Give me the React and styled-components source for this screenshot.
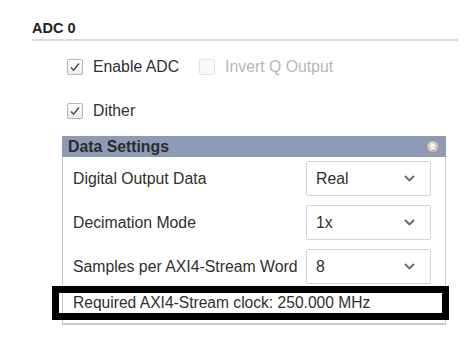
import React from "react";
import styled, { createGlobalStyle } from "styled-components";

const GlobalStyle = createGlobalStyle`
  html, body {
    margin: 0;
    padding: 0;
    background: #ffffff;
  }
  body {
    font-family: "Liberation Sans", Arial, sans-serif;
    color: #333333;
  }
`;

const Section = styled.section`
  width: 474px;
  height: 339px;
  box-sizing: border-box;
  padding: 20px 16px 0 32px;
  overflow: hidden;
`;

const Title = styled.h3`
  margin: 0;
  padding-bottom: 2px;
  font-size: 14.5px;
  line-height: 17px;
  font-weight: bold;
  color: #222222;
  border-bottom: 2px solid #dadada;
`;

const OptionRow = styled.div`
  display: flex;
  align-items: center;
  height: 20px;
  margin: ${(p) => p.$top}px 0 0 35px;
`;

const Option = styled.label`
  display: flex;
  align-items: center;
  gap: 10px;
  margin-right: 20px;
  font-size: 15.8px;
  color: ${(p) => (p.$disabled ? "#b8b8b8" : "#2f2f2f")};
`;

const Box = styled.span`
  width: 16px;
  height: 16px;
  box-sizing: border-box;
  border-radius: 2px;
  border: 1px solid ${(p) => (p.$disabled ? "#e2e2e2" : "#b5b5b5")};
  background: ${(p) =>
    p.$disabled ? "#fafafa" : "linear-gradient(#ffffff, #ececec)"};
  display: flex;
  align-items: center;
  justify-content: center;
`;

const Panel = styled.div`
  margin: 15px 0 0 30px;
  width: 384px;
`;

const PanelHeader = styled.div`
  display: flex;
  align-items: center;
  justify-content: space-between;
  height: 21px;
  padding: 0 6px;
  background: #8e9bb6;
  font-size: 15.8px;
  font-weight: bold;
  color: #2b2b2b;
`;

const PanelBody = styled.div`
  display: flex;
  flex-direction: column;
  gap: 9px;
  padding: 4px 0 3px;
  border: 1px solid #c3c9d6;
  border-top: none;
  border-bottom: 2px solid #c3c9d6;
`;

const FieldRow = styled.div`
  display: flex;
  align-items: center;
  justify-content: space-between;
  height: 35px;
  padding: 0 14px 0 10px;
  font-size: 15.8px;
  color: #2f2f2f;
`;

const Select = styled.div`
  width: 125px;
  height: 35px;
  box-sizing: border-box;
  display: flex;
  align-items: center;
  justify-content: space-between;
  padding: 0 15px 0 9px;
  border: 1px solid #d4d4d4;
  border-radius: 2px;
  background: #ffffff;
  font-size: 15.8px;
  color: #2f2f2f;
`;

const ClockRow = styled.div`
  position: relative;
  display: flex;
  align-items: center;
  height: 34px;
  margin-top: -7px;
  padding-left: 10px;
  font-size: 15.6px;
  color: #2f2f2f;

  &::after {
    content: "";
    position: absolute;
    top: 0;
    bottom: 0;
    left: -11px;
    right: -4px;
    border: 7px solid #000000;
  }
`;

const Check = () => (
  <svg width="12" height="12" viewBox="0 0 12 12">
    <path d="M2 6.5 L4.6 9.2 L10 2.5" fill="none" stroke="#4a4a4a" strokeWidth="1.4" />
  </svg>
);

const Chevron = () => (
  <svg width="11" height="7" viewBox="0 0 11 7">
    <path d="M1 1 L5.5 5.5 L10 1" fill="none" stroke="#666666" strokeWidth="1.8" />
  </svg>
);

const Collapse = () => (
  <svg width="14" height="14" viewBox="0 0 14 14">
    <defs>
      <radialGradient id="cg" cx="0.4" cy="0.35" r="0.7">
        <stop offset="0" stopColor="#eeeae0" />
        <stop offset="1" stopColor="#aaa596" />
      </radialGradient>
    </defs>
    <circle cx="7" cy="7" r="6.3" fill="url(#cg)" stroke="#8f8a7c" strokeWidth="0.7" />
    <path d="M4.4 6.6 L7 4.2 L9.6 6.6 M4.4 9.6 L7 7.2 L9.6 9.6" fill="none" stroke="#ffffff" strokeWidth="1.2" />
  </svg>
);

const fields = [
  { label: "Digital Output Data", value: "Real" },
  { label: "Decimation Mode", value: "1x" },
  { label: "Samples per AXI4-Stream Word", value: "8" },
];

const App = () => {
  return (
    <>
      <GlobalStyle />
      <Section>
        <Title>ADC 0</Title>
        <OptionRow $top={16}>
          <Option>
            <Box>
              <Check />
            </Box>
            Enable ADC
          </Option>
          <Option $disabled>
            <Box $disabled />
            Invert Q Output
          </Option>
        </OptionRow>
        <OptionRow $top={24}>
          <Option>
            <Box>
              <Check />
            </Box>
            Dither
          </Option>
        </OptionRow>
        <Panel>
          <PanelHeader>
            <span>Data Settings</span>
            <Collapse />
          </PanelHeader>
          <PanelBody>
            {fields.map((f) => (
              <FieldRow key={f.label}>
                <span>{f.label}</span>
                <Select>
                  <span>{f.value}</span>
                  <Chevron />
                </Select>
              </FieldRow>
            ))}
            <ClockRow>Required AXI4-Stream clock: 250.000 MHz</ClockRow>
          </PanelBody>
        </Panel>
      </Section>
    </>
  );
};

export default App;
